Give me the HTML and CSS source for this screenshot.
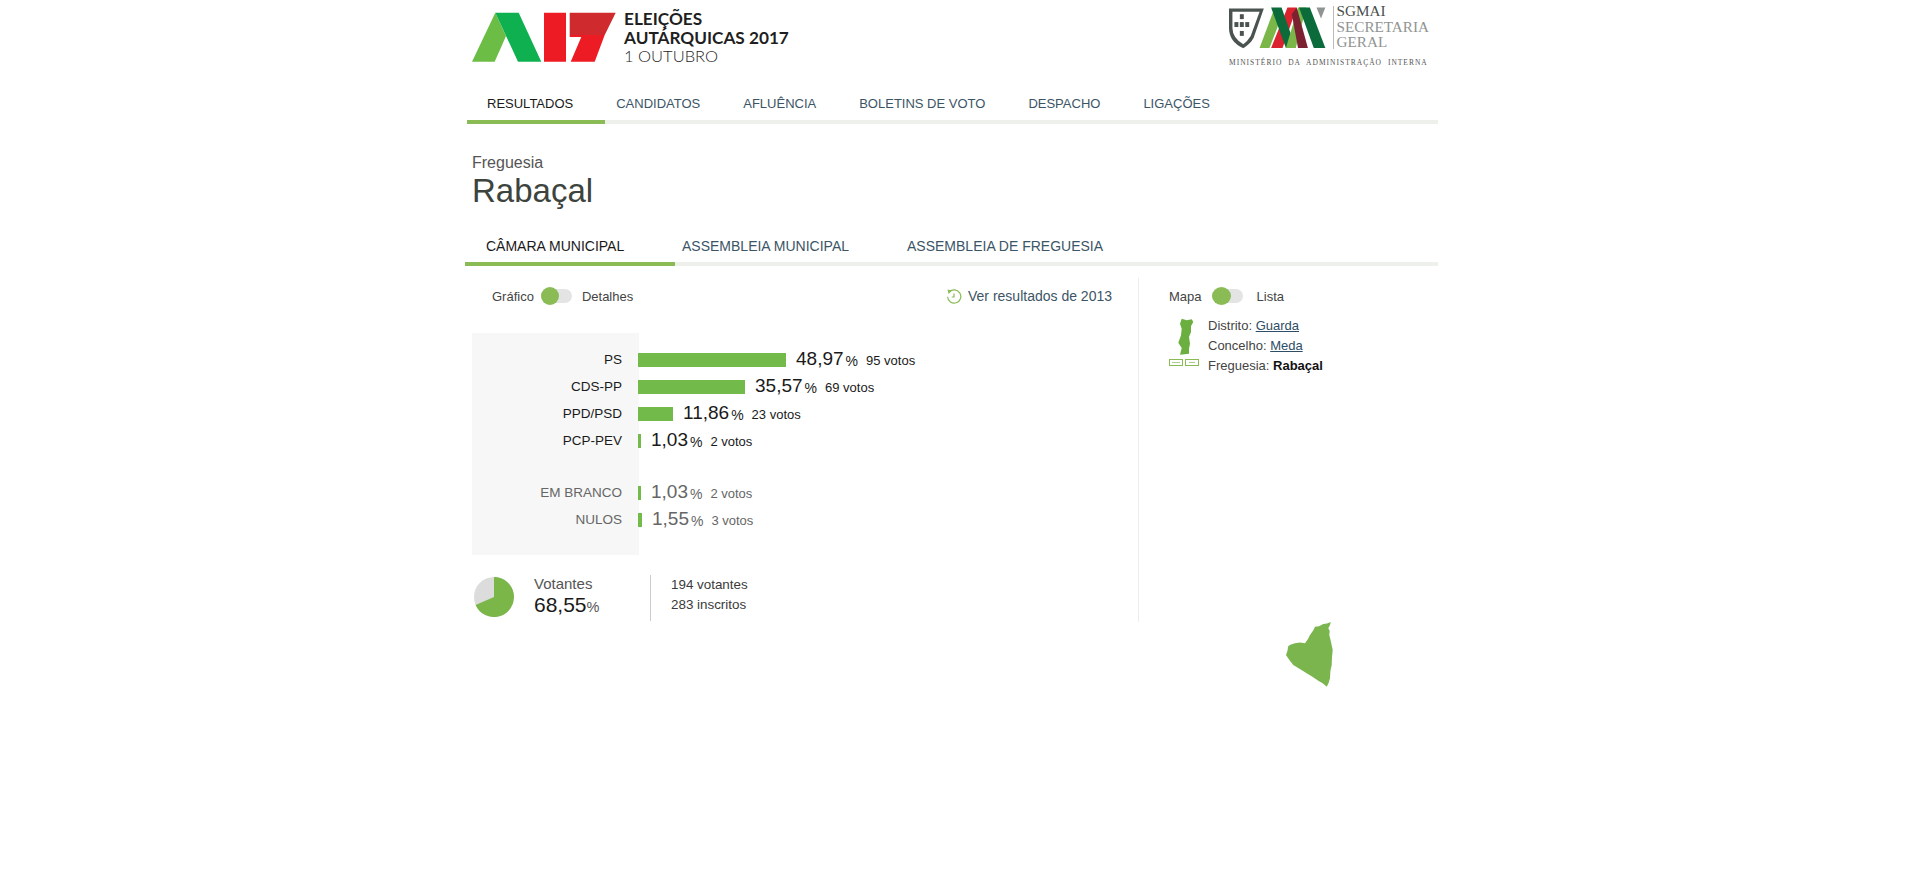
FILE: index.html
```html
<!DOCTYPE html>
<html lang="pt">
<head>
<meta charset="utf-8">
<title>Eleições Autárquicas 2017</title>
<link rel="stylesheet" href="styles.css">
</head>
<body>
<div class="page">
  <header class="header">
    <div class="brand">
      <svg class="brand-mark" width="145" height="52" viewBox="0 0 145 52">
        <polygon points="0,49.7 23.3,0.7 34,24 22.7,49.7" fill="#6cbd45"/>
        <polygon points="23.3,0.7 46.7,0.7 69.3,49.7 46,49.7" fill="#0fb050"/>
        <polygon points="72,0.7 94,0.7 94,49.7 72,49.7" fill="#ed1c24"/>
        <polygon points="97.7,0.7 143.7,0.7 132.7,23 97.7,23" fill="#cf2a2e"/>
        <polygon points="97.7,23 132.7,23 122.7,49.7 98.7,49.7 109.3,25 97.7,25" fill="#ed1c24"/>
      </svg>
      <div class="brand-text">
        <div class="brand-line">ELEIÇÕES</div>
        <div class="brand-line">AUTÁRQUICAS 2017</div>
        <div class="brand-line thin">1 OUTUBRO</div>
      </div>
    </div>
    <div class="sgmai">
      <div class="sgmai-top">
        <svg width="105" height="43" viewBox="0 0 105 43">
          <path d="M0 2.3 H35.3 L25 32 Q22 38 14.5 42.5 Q0 36 0 22 Z" fill="#4a5350"/>
          <path d="M3.5 5.5 H31 L22 30 Q19 35 14.5 38.5 Q3.5 32 3.5 22 Z" fill="#fff"/>
          <g fill="#4a5350">
            <rect x="11" y="8" width="4" height="5"/>
            <rect x="5.5" y="16" width="4" height="5"/>
            <rect x="11" y="16" width="4" height="5"/>
            <rect x="16.5" y="16" width="4" height="5"/>
            <rect x="11" y="25" width="4" height="5"/>
          </g>
          <polygon points="31,42.3 41,42.3 53.3,10.7 46,2.3" fill="#7ab648"/>
          <polygon points="42.7,42.3 54.3,42.3 68.7,1.3 59.3,1.3" fill="#d9232e"/>
          <polygon points="42.7,1.3 53.3,1.3 67.7,42.3 57.7,42.3" fill="#0b6b3a"/>
          <polygon points="57.7,42.3 67.7,42.3 78.3,1.3 70,1.3" fill="#7ab648"/>
          <polygon points="63.7,8 68.7,1.3 80,42.3 70,42.3" fill="#7b2132"/>
          <polygon points="71,1.3 82,1.3 97.7,42.3 86,42.3" fill="#0b6b3a"/>
          <polygon points="88.7,1.3 97.7,1.3 93.3,12.3" fill="#8f9392"/>
        </svg>
        <div class="sgmai-name">
          <div class="dark">SGMAI</div>
          <div>SECRETARIA</div>
          <div>GERAL</div>
        </div>
      </div>
      <div class="sgmai-sub">MINISTÉRIO DA ADMINISTRAÇÃO INTERNA</div>
    </div>
  </header>

  <nav class="nav">
    <a class="nav-item active">RESULTADOS</a>
    <a class="nav-item">CANDIDATOS</a>
    <a class="nav-item">AFLUÊNCIA</a>
    <a class="nav-item">BOLETINS DE VOTO</a>
    <a class="nav-item">DESPACHO</a>
    <a class="nav-item">LIGAÇÕES</a>
  </nav>

  <div class="title">
    <div class="title-kind">Freguesia</div>
    <h1 class="title-name">Rabaçal</h1>
  </div>

  <div class="tabs">
    <a class="tab active">CÂMARA MUNICIPAL</a>
    <a class="tab">ASSEMBLEIA MUNICIPAL</a>
    <a class="tab">ASSEMBLEIA DE FREGUESIA</a>
  </div>

  <div class="content">
    <section class="results">
      <div class="results-bar">
        <div class="toggle-row">
          <span>Gráfico</span>
          <span class="toggle"><i></i></span>
          <span>Detalhes</span>
        </div>
        <a class="history">
          <svg width="16" height="17" viewBox="0 0 16 17"><path d="M3.2 4.2 A6.6 6.6 0 1 1 1.6 8.8" fill="none" stroke="#8abb55" stroke-width="1.2"/><polygon points="1.5,1.6 6,2.6 2.6,6" fill="#8abb55"/><path d="M8 5.5 V9 H5.8" fill="none" stroke="#8abb55" stroke-width="1.2"/></svg>
          <span>Ver resultados de 2013</span>
        </a>
      </div>

      <div class="chart">
        <div class="chart-row"><div class="label">PS</div><div class="bar" style="width:148px"></div><div class="pct">48,97</div><div class="pct-sign">%</div><div class="votes">95 votos</div></div>
        <div class="chart-row"><div class="label">CDS-PP</div><div class="bar" style="width:107px"></div><div class="pct">35,57</div><div class="pct-sign">%</div><div class="votes">69 votos</div></div>
        <div class="chart-row"><div class="label">PPD/PSD</div><div class="bar" style="width:35px"></div><div class="pct">11,86</div><div class="pct-sign">%</div><div class="votes">23 votos</div></div>
        <div class="chart-row"><div class="label">PCP-PEV</div><div class="bar" style="width:3px"></div><div class="pct">1,03</div><div class="pct-sign">%</div><div class="votes">2 votos</div></div>
        <div class="chart-row muted gap"><div class="label">EM BRANCO</div><div class="bar" style="width:3px"></div><div class="pct">1,03</div><div class="pct-sign">%</div><div class="votes">2 votos</div></div>
        <div class="chart-row muted"><div class="label">NULOS</div><div class="bar" style="width:4px"></div><div class="pct">1,55</div><div class="pct-sign">%</div><div class="votes">3 votos</div></div>
      </div>

      <div class="turnout">
        <svg class="pie" width="40" height="40" viewBox="0 0 40 40">
          <circle cx="20" cy="20" r="20" fill="#dcdcdc"/>
          <path d="M20 20 L20 0 A20 20 0 1 1 1.6 27.9 Z" fill="#7ab648"/>
        </svg>
        <div class="turnout-main">
          <div class="turnout-label">Votantes</div>
          <div class="turnout-value">68,55<small>%</small></div>
        </div>
        <div class="turnout-detail">
          <div>194 votantes</div>
          <div>283 inscritos</div>
        </div>
      </div>
    </section>

    <aside class="side">
      <div class="toggle-row side-toggle">
        <span>Mapa</span>
        <span class="toggle"><i></i></span>
        <span>Lista</span>
      </div>
      <div class="place">
        <div class="mini">
          <svg width="30" height="52" viewBox="0 0 30 52">
            <path d="M12.7 3.7 L17.7 5.3 L22.7 4.3 L24.3 7 L22 11 L22 17 L20 22 L21 28.7 L20 33.7 L20 38.7 L11 39.7 L12.7 33 L9.3 27.7 L12 20.3 L12.7 13.7 L11 8.7 Z" fill="#6aaf3f"/>
            <rect x="0.5" y="44.5" width="13" height="6" fill="#fff" stroke="#8abb55"/>
            <rect x="16.5" y="44.5" width="13" height="6" fill="#fff" stroke="#8abb55"/>
            <rect x="3" y="47" width="8" height="1" fill="#a9cf86"/>
            <rect x="20" y="47" width="6" height="1" fill="#a9cf86"/>
          </svg>
        </div>
        <div class="place-list">
          <div>Distrito: <a>Guarda</a></div>
          <div>Concelho: <a>Meda</a></div>
          <div>Freguesia: <b>Rabaçal</b></div>
        </div>
      </div>
    </aside>
  </div>

  <div class="map-row">
    <svg width="48" height="66" viewBox="0 0 48 66">
      <path d="M45.7 1 L42 2.6 L38.3 3 L34 5.2 L30 5.7 L28.5 9 L25 14 L23 18 L20 22.3 L15 21.4 L10 22.3 L6 23.5 L3.3 25 L2.4 30 L1 34 L4 38.6 L8.3 44 L14 47.6 L21.7 52.3 L27 55.4 L33.3 59.7 L38 62.4 L41.7 65.7 L43.6 62 L45 57.3 L45.4 50 L46.7 44 L47 36 L47.7 29 L46 21 L44.3 14 L44.7 10 L43.3 7.3 L45 4 Z" fill="#7ab54e"/>
    </svg>
  </div>
</div>
</body>
</html>
```

FILE: styles.css
```css
* { box-sizing: border-box; }
html, body { margin: 0; padding: 0; background: #fff; }
body { font-family: "Liberation Sans", Arial, sans-serif; color: #3a3a3a; height: 893px; overflow: hidden; }
a { color: inherit; }

.page { width: 973px; margin-left: 465px; }

.header { height: 86px; display: flex; justify-content: space-between; padding: 0 9px 0 7px; }
.brand { display: flex; align-items: flex-start; padding-top: 12px; }
.brand-mark { display: block; }
.brand-text { margin: -3px 0 0 7px; font-family: "Lato", sans-serif; color: #1f1f1f; font-size: 17.2px; line-height: 19px; font-weight: 700; }
.brand-line.thin { font-weight: 300; font-size: 16.5px; line-height: 19px; }

.sgmai { width: 200px; padding-top: 6px; }
.sgmai-top { display: flex; height: 43px; }
.sgmai-name { padding-left: 3px; border-left: 1px solid #bbb; font-family: "Liberation Serif", serif; font-size: 15.2px; line-height: 15.5px; color: #8f9392; height: 43px; white-space: nowrap; }
.sgmai-name .dark { margin-top: -3px; color: #4a4f4d; }
.sgmai-sub { margin-top: 9px; font-family: "Liberation Serif", serif; font-size: 7.5px; letter-spacing: 1px; word-spacing: 3px; color: #555; white-space: nowrap; line-height: 9px; }

.nav { margin-left: 2px; height: 38px; display: flex; border-bottom: 4px solid #eef0ec; }
.nav-item { height: 38px; padding: 9px 32px 0 11px; font-size: 13px; line-height: 17px; color: #3c5566; }
.nav-item.active { padding-left: 20px; color: #1a1a1a; border-bottom: 4px solid #8abb55; }

.title { padding: 30px 0 0 7px; height: 92px; }
.title-kind { font-size: 16px; line-height: 18px; color: #555; }
.title-name { margin: 0; font-size: 33px; line-height: 37px; font-weight: 400; color: #3d433d; }

.tabs { margin-top: 10px; height: 40px; display: flex; border-bottom: 4px solid #eef0ec; }
.tab { height: 40px; padding: 12px 51px 0 7px; font-size: 14px; line-height: 17px; color: #3c5566; white-space: nowrap; }
.tab.active { width: 210px; padding-left: 21px; padding-right: 0; color: #1a1a1a; border-bottom: 4px solid #8abb55; }

.content { display: flex; margin-top: 12px; height: 344px; }
.results { width: 673px; padding-left: 7px; }
.side { flex: 1; border-left: 1px solid #eceeea; padding-left: 30px; }

.results-bar { height: 36px; display: flex; justify-content: space-between; align-items: center; padding: 0 26px 0 20px; }
.toggle-row { display: flex; align-items: center; font-size: 13px; line-height: 17px; color: #444; }
.toggle { display: block; width: 31px; height: 14px; border-radius: 7px; margin: 0 10px 0 7px; background: #e4e4e4; }
.toggle i { display: block; width: 18px; height: 18px; margin-top: -2px; border-radius: 50%; background: #8abb55; }
.history { display: flex; align-items: center; gap: 6px; font-size: 14px; color: #3c5566; }

.chart { margin-top: 19px; height: 222px; padding-top: 20px; background: linear-gradient(to right, #f7f7f7 167px, transparent 167px); }
.chart-row { display: flex; height: 27px; align-items: flex-start; color: #1a1a1a; }
.chart-row.gap { margin-top: 25px; }
.chart-row.muted { color: #666; }
.label { width: 150px; text-align: right; font-size: 13.5px; line-height: 14px; white-space: nowrap; }
.bar { height: 14px; margin-left: 16px; background: #72bb4a; }
.pct { margin-left: 10px; font-size: 19px; line-height: 12px; }
.pct-sign { margin-left: 2px; font-size: 14px; line-height: 16px; }
.votes { margin-left: 8px; font-size: 13px; line-height: 16px; white-space: nowrap; }

.turnout { display: flex; align-items: flex-start; margin-top: 20px; }
.pie { margin: 2px 0 0 2px; display: block; }
.turnout-main { margin-left: 20px; width: 116px; }
.turnout-label { font-size: 15px; line-height: 18px; color: #555; }
.turnout-value { font-size: 21px; line-height: 24px; color: #1a1a1a; }
.turnout-value small { font-size: 14.5px; color: #555; }
.turnout-detail { border-left: 1px solid #ccc; height: 46px; padding-left: 20px; font-size: 13.4px; line-height: 19.5px; color: #3a3a3a; }

.side-toggle { height: 36px; }
.side-toggle .toggle { margin: 0 14px 0 10px; }
.side-toggle .toggle i { width: 19px; }
.place { display: flex; margin-top: 2px; }
.mini { margin-top: -1px; }
.mini svg { display: block; }
.place-list { margin-left: 9px; font-size: 13px; line-height: 20px; color: #444; }
.place-list a { color: #2e4d66; text-decoration: underline; }
.place-list b { color: #111; }

.map-row { padding-left: 820px; margin-top: -1px; }
.map-row svg { display: block; }
```
